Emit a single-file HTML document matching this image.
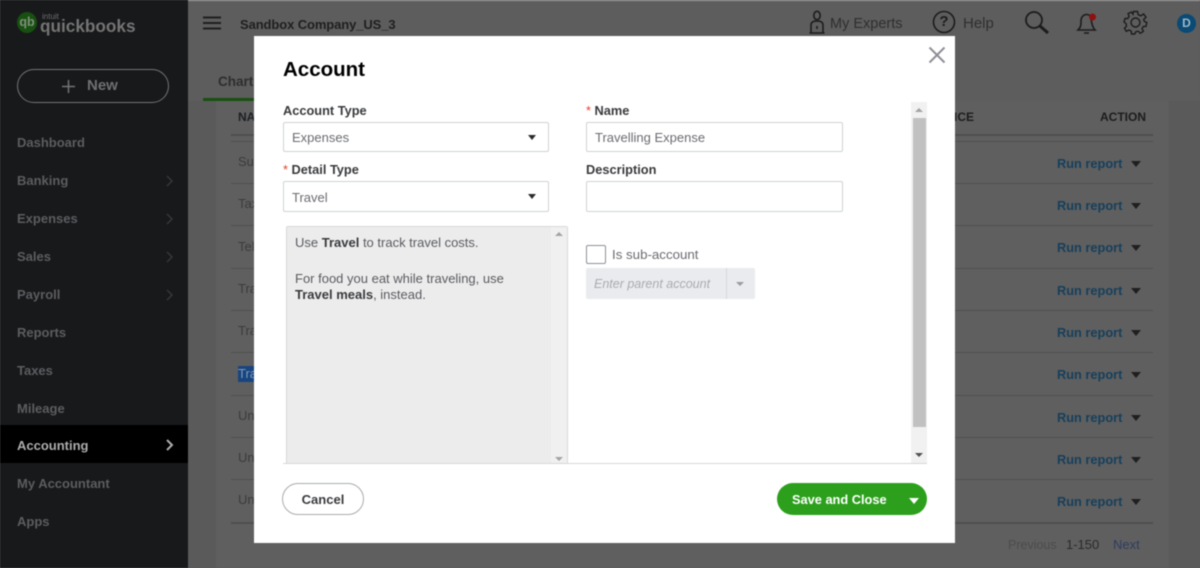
<!DOCTYPE html>
<html>
<head>
<meta charset="utf-8">
<style>
*{box-sizing:border-box}
html,body{margin:0;padding:0;width:1200px;height:568px;overflow:hidden;font-family:"Liberation Sans",sans-serif;background:#5d5d5d}
#w{position:absolute;left:0;top:0;width:1200px;height:568px;overflow:hidden;background:#5d5d5d;filter:blur(.4px)}
.a{position:absolute;white-space:nowrap}
.nav{position:absolute;left:17px;color:#5c5d60;font-size:13px;font-weight:700;line-height:18px;white-space:nowrap}
.line{position:absolute;left:231px;width:922px;height:1px;background:#505050}
.rr{position:absolute;left:1057px;color:#163f5c;font-size:12.8px;font-weight:700;line-height:16px;white-space:nowrap}
.tri{position:absolute;width:0;height:0;border-left:5px solid transparent;border-right:5px solid transparent;border-top:6px solid #1f1f1f}
.row{position:absolute;left:238px;color:#3b3b3b;font-size:13px;line-height:16px}
.lab{position:absolute;font-size:12.8px;font-weight:700;color:#393a3d;line-height:16px;white-space:nowrap}
.inp{position:absolute;background:#fff;border:1px solid #cfd1d5;border-radius:2px;font-size:13px;color:#6b6c72;padding-left:8px;white-space:nowrap}
.star{color:#e0432b;font-weight:400}
</style>
</head>
<body>
<div id="w">
<!-- top strip -->
<div class="a" style="left:0;top:0;width:1200px;height:1px;background:#a5a5a5"></div>
<!-- main panels -->
<div class="a" style="left:188px;top:101px;width:28px;height:467px;background:#5a5a5a"></div>
<div class="a" style="left:216px;top:101px;width:953px;height:467px;background:#5f5f5f"></div>
<div class="a" style="left:1169px;top:101px;width:31px;height:467px;background:#5a5a5a"></div>

<!-- sidebar -->
<div class="a" style="left:0;top:0;width:188px;height:568px;background:#18191b"></div>
<div class="a" style="left:17px;top:12px;width:20px;height:21px;border-radius:50%;background:#175010;color:#7f907c;font-size:12.5px;font-weight:700;line-height:20px;text-align:center">qb</div>
<div class="a" style="left:42px;top:12px;color:#6d6d6d;font-size:8px;line-height:10px">intuit</div>
<div class="a" style="left:40px;top:15px;color:#747474;font-size:17.2px;font-weight:700;line-height:22px">quickbooks</div>
<div class="a" style="left:17px;top:69px;width:152px;height:34px;border:1.5px solid #737476;border-radius:17px"></div>
<svg class="a" style="left:62px;top:80px" width="13" height="13"><path d="M6.5 0V13M0 6.5H13" stroke="#737476" stroke-width="1.5"/></svg>
<div class="a" style="left:87px;top:77px;color:#6f7072;font-size:15px;font-weight:700;line-height:18px">New</div>

<div class="a" style="left:0;top:425px;width:188px;height:38px;background:#000"></div>
<div class="nav" style="top:134px">Dashboard</div>
<div class="nav" style="top:172px">Banking</div>
<div class="nav" style="top:210px">Expenses</div>
<div class="nav" style="top:248px">Sales</div>
<div class="nav" style="top:286px">Payroll</div>
<div class="nav" style="top:324px">Reports</div>
<div class="nav" style="top:362px">Taxes</div>
<div class="nav" style="top:400px">Mileage</div>
<div class="nav" style="top:437px;color:#adadad">Accounting</div>
<div class="nav" style="top:475px">My Accountant</div>
<div class="nav" style="top:513px">Apps</div>
<svg class="a" style="left:166px;top:175px" width="8" height="160" fill="none" stroke="#36373a" stroke-width="1.5"><path d="M1 1L6 6L1 11M1 39L6 44L1 49M1 77L6 82L1 87M1 115L6 120L1 125"/></svg>
<svg class="a" style="left:166px;top:439px" width="8" height="12" fill="none" stroke="#adadad" stroke-width="2"><path d="M1 1L6 6L1 11"/></svg>

<!-- header -->
<svg class="a" style="left:203px;top:16px" width="18" height="14"><path d="M0 1.5H18M0 7H18M0 12.5H18" stroke="#1f1f1f" stroke-width="2"/></svg>
<div class="a" style="left:240px;top:16px;color:#1f1f1f;font-size:13px;font-weight:700;line-height:18px;letter-spacing:-.1px">Sandbox Company_US_3</div>
<svg class="a" style="left:808px;top:10px" width="18" height="25" fill="none" stroke="#1c1c1c" stroke-width="1.6"><ellipse cx="9" cy="5.5" rx="3.2" ry="4.2"/><path d="M3 23V15C3 12.5 5 11 9 11S15 12.5 15 15V23ZM1.5 23H16.5M9 16V19"/></svg>
<div class="a" style="left:830px;top:15px;color:#2f2f2f;font-size:14.5px;line-height:18px">My Experts</div>
<svg class="a" style="left:932px;top:10px" width="24" height="24" fill="none" stroke="#1c1c1c" stroke-width="1.6"><circle cx="12" cy="12" r="10.5"/></svg>
<div class="a" style="left:932px;top:12px;width:24px;text-align:center;color:#1c1c1c;font-size:15px;font-weight:700;line-height:20px">?</div>
<div class="a" style="left:963px;top:15px;color:#2f2f2f;font-size:15px;line-height:18px">Help</div>
<svg class="a" style="left:1024px;top:10px" width="26" height="25" fill="none" stroke="#1c1c1c"><circle cx="10" cy="10" r="8" stroke-width="1.8"/><path d="M16 16L24 23" stroke-width="3"/></svg>
<svg class="a" style="left:1076px;top:11px" width="22" height="25" fill="none" stroke="#1c1c1c" stroke-width="1.6"><path d="M2 19C5 16 5 14 5 10C5 6 7.5 3.5 10.5 3.5C12 3.5 13.5 4 14.5 5.5C15.5 8 15 15 19 19ZM2 19H19M8 22H13"/><circle cx="16.5" cy="6" r="3.5" fill="#8f1010" stroke="none"/></svg>
<svg class="a" style="left:1123px;top:10px" width="25" height="25" fill="none" stroke="#1c1c1c" stroke-width="1.4"><circle cx="12.5" cy="12.5" r="4.5"/><path d="M10.5 1.5H14.5L15.2 4.7L17.8 5.8L20.6 4L23 7.2L20.7 9.5L21.2 11.2L23.8 12.5L23 16.3L20.2 16.5L19 18.7L20.4 21.3L17.3 23.3L15.3 21.2L13 21.6L11.7 24H8.5L8.2 21.1L6 20L3.3 21.3L1.5 18.2L3.5 16.2L3 13.5L1 12L2 8.5L4.8 8.5L6.2 6.3L5 3.7L8.3 2L10 4.3Z"/></svg>
<div class="a" style="left:1177px;top:14px;width:19px;height:19px;border-radius:50%;background:#0a4a75;color:#9fb8c8;font-size:12px;font-weight:700;line-height:19px;text-align:center">D</div>

<!-- tab -->
<div class="a" style="left:218px;top:73px;color:#2e2e2e;font-size:13.5px;font-weight:700;line-height:18px">Chart</div>
<div class="a" style="left:203px;top:98px;width:60px;height:3px;background:#175010"></div>

<!-- table -->
<div class="a" style="left:238px;top:109px;color:#1c1f26;font-size:12px;font-weight:700;line-height:16px">NAME</div>
<div class="a" style="left:940px;top:109px;color:#1c1c1c;font-size:12px;font-weight:700;line-height:16px">ANCE</div>
<div class="a" style="left:1100px;top:109px;color:#1c1c1c;font-size:12px;font-weight:700;line-height:16px">ACTION</div>
<div class="line" style="top:134px;height:2px;background:#4e4e4e"></div>
<div class="line" style="top:141px"></div>
<div class="line" style="top:183px"></div>
<div class="line" style="top:225px"></div>
<div class="line" style="top:268px"></div>
<div class="line" style="top:310px"></div>
<div class="line" style="top:352px"></div>
<div class="line" style="top:395px"></div>
<div class="line" style="top:437px"></div>
<div class="line" style="top:479px"></div>
<div class="line" style="top:522px;height:2px;background:#4e4e4e"></div>

<div class="row" style="top:154px">Sup</div>
<div class="row" style="top:196px">Tax</div>
<div class="row" style="top:239px">Tel</div>
<div class="row" style="top:281px">Tra</div>
<div class="row" style="top:323px">Tra</div>
<div class="a" style="left:238px;top:366px;width:16px;height:16px;background:#174580"></div>
<div class="row" style="top:366px;color:#7f97b5">Tra</div>
<div class="row" style="top:408px">Un</div>
<div class="row" style="top:450px">Un</div>
<div class="row" style="top:492px">Un</div>

<div class="rr" style="top:156px">Run report</div><div class="tri" style="left:1131px;top:161px"></div>
<div class="rr" style="top:198px">Run report</div><div class="tri" style="left:1131px;top:203px"></div>
<div class="rr" style="top:240px">Run report</div><div class="tri" style="left:1131px;top:245px"></div>
<div class="rr" style="top:283px">Run report</div><div class="tri" style="left:1131px;top:288px"></div>
<div class="rr" style="top:325px">Run report</div><div class="tri" style="left:1131px;top:330px"></div>
<div class="rr" style="top:367px">Run report</div><div class="tri" style="left:1131px;top:372px"></div>
<div class="rr" style="top:410px">Run report</div><div class="tri" style="left:1131px;top:415px"></div>
<div class="rr" style="top:452px">Run report</div><div class="tri" style="left:1131px;top:457px"></div>
<div class="rr" style="top:494px">Run report</div><div class="tri" style="left:1131px;top:499px"></div>

<div class="a" style="left:1008px;top:537px;color:#4c4c4c;font-size:12.5px;line-height:16px">Previous</div>
<div class="a" style="left:1066px;top:537px;color:#2a2a2a;font-size:13px;line-height:16px">1-150</div>
<div class="a" style="left:1113px;top:537px;color:#2e3c5f;font-size:13px;line-height:16px">Next</div>

<!-- modal -->
<div class="a" style="left:254px;top:36px;width:701px;height:507px;background:#fff"></div>
<div class="a" style="left:283px;top:57px;color:#000;font-size:20.5px;font-weight:700;line-height:26px">Account</div>
<svg class="a" style="left:928px;top:46px" width="18" height="18"><path d="M1.5 1.5L16.5 16.5M16.5 1.5L1.5 16.5" stroke="#8d9096" stroke-width="2"/></svg>

<div class="lab" style="left:283px;top:103px">Account Type</div>
<div class="inp" style="left:283px;top:122px;width:266px;height:30px;line-height:30px">Expenses</div>
<div class="tri" style="left:528px;top:135px;border-top-color:#2b2b2b;border-left-width:4.5px;border-right-width:4.5px;border-top-width:5px"></div>
<div class="lab" style="left:283px;top:162px"><span class="star">*</span> Detail Type</div>
<div class="inp" style="left:283px;top:181px;width:266px;height:31px;line-height:31px">Travel</div>
<div class="tri" style="left:528px;top:194px;border-top-color:#2b2b2b;border-left-width:4.5px;border-right-width:4.5px;border-top-width:5px"></div>

<!-- help box -->
<div class="a" style="left:286px;top:226px;width:282px;height:237px;background:#ececec;border:1px solid #d9d9d9;border-bottom:none;border-radius:2px 2px 0 0"></div>
<div class="a" style="left:551px;top:227px;width:16px;height:236px;background:#f0f0f0"></div>
<div class="tri" style="left:555px;top:232px;border-top:none;border-bottom:4px solid #a3a3a3;border-left-width:4px;border-right-width:4px"></div>
<div class="tri" style="left:555px;top:457px;border-top:4px solid #a3a3a3;border-left-width:4px;border-right-width:4px"></div>
<div class="a" style="left:295px;top:235px;color:#5a5b60;font-size:13px;line-height:16px">Use <b style="color:#393a3d">Travel</b> to track travel costs.</div>
<div class="a" style="left:295px;top:271px;color:#5a5b60;font-size:13px;line-height:16px">For food you eat while traveling, use</div>
<div class="a" style="left:295px;top:287px;color:#5a5b60;font-size:13px;line-height:16px"><b style="color:#393a3d">Travel meals</b>, instead.</div>

<div class="lab" style="left:586px;top:103px"><span class="star">*</span> Name</div>
<div class="inp" style="left:586px;top:122px;width:257px;height:30px;line-height:29px">Travelling Expense</div>
<div class="lab" style="left:586px;top:162px">Description</div>
<div class="inp" style="left:586px;top:181px;width:257px;height:31px"></div>
<div class="a" style="left:586px;top:245px;width:20px;height:19px;background:#fff;border:1px solid #8d9096;border-radius:2px"></div>
<div class="a" style="left:612px;top:247px;color:#6b6c72;font-size:13.3px;line-height:16px">Is sub-account</div>
<div class="a" style="left:586px;top:268px;width:169px;height:31px;background:#e9ebee;border-radius:2px"></div>
<div class="a" style="left:726px;top:268px;width:1px;height:31px;background:#d6d8db"></div>
<div class="a" style="left:594px;top:276px;color:#a9abb0;font-size:12.5px;font-style:italic;line-height:16px">Enter parent account</div>
<div class="tri" style="left:736px;top:282px;border-top-color:#9a9ca1;border-left-width:4px;border-right-width:4px;border-top-width:4.5px"></div>

<!-- modal scrollbar -->
<div class="a" style="left:911px;top:102px;width:16px;height:361px;background:#f1f1f1"></div>
<div class="a" style="left:913px;top:118px;width:13px;height:309px;background:#c1c1c1"></div>
<div class="tri" style="left:915px;top:108px;border-top:none;border-bottom:4px solid #a3a3a3;border-left-width:4px;border-right-width:4px"></div>
<div class="tri" style="left:915px;top:453px;border-top:4px solid #505050;border-left-width:4px;border-right-width:4px"></div>

<div class="a" style="left:283px;top:463px;width:644px;height:1px;background:#d6d7d9"></div>

<!-- buttons -->
<div class="a" style="left:282px;top:483px;width:82px;height:32px;border:1px solid #a9abaf;border-radius:16px;background:#fff;color:#393a3d;font-size:13px;font-weight:700;line-height:31px;text-align:center">Cancel</div>
<div class="a" style="left:777px;top:483px;width:150px;height:32px;border-radius:16px;background:#2ca01c"></div>
<div class="a" style="left:792px;top:492px;color:#fff;font-size:12.8px;font-weight:700;line-height:16px">Save and Close</div>
<div class="tri" style="left:909px;top:498px;border-top-color:#fff;border-top-width:6px"></div>
</div>
</body>
</html>
